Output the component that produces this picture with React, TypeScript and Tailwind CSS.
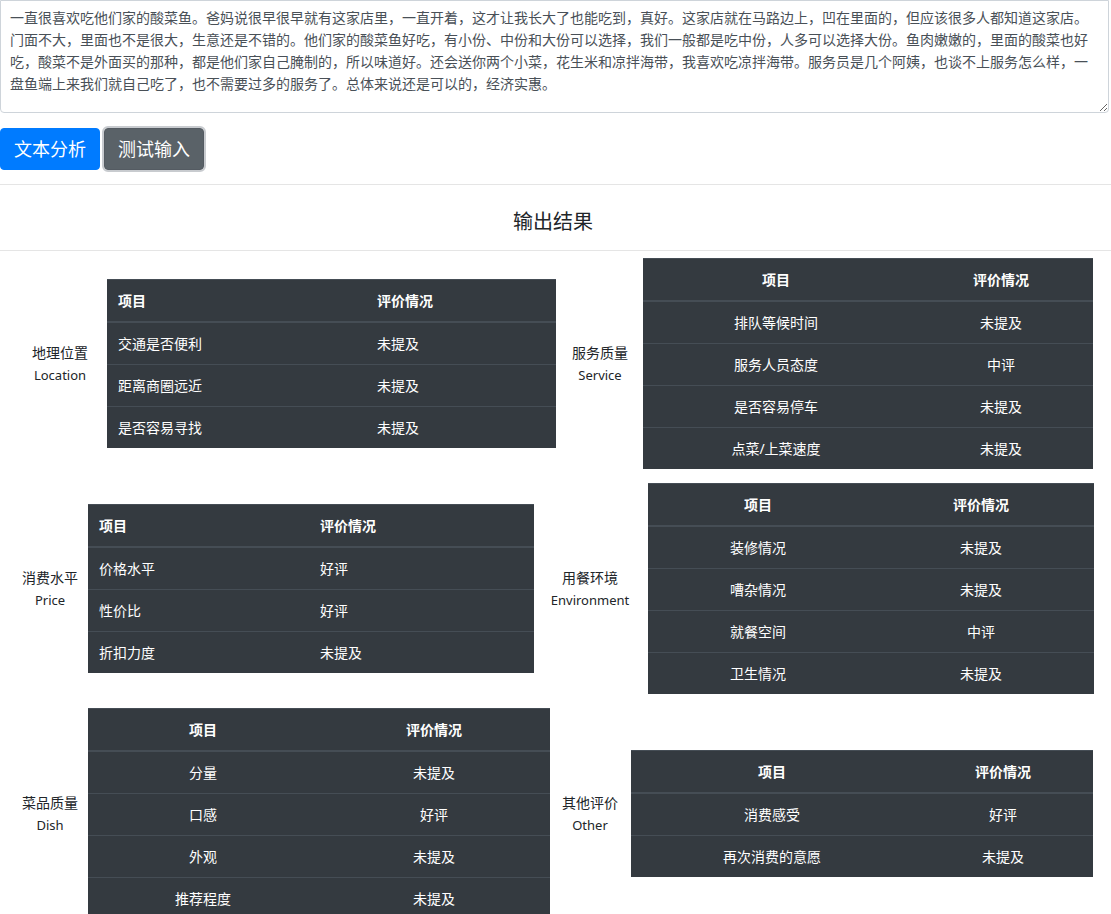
import React from 'react'

type Row = [string, string]

interface Section {
  zh: string
  en: string
  rows: Row[]
  width: string
  col1: string
  center?: boolean
  labelClass: string
  tableClass: string
}

const review =
  '一直很喜欢吃他们家的酸菜鱼。爸妈说很早很早就有这家店里，一直开着，这才让我长大了也能吃到，真好。这家店就在马路边上，凹在里面的，但应该很多人都知道这家店。门面不大，里面也不是很大，生意还是不错的。他们家的酸菜鱼好吃，有小份、中份和大份可以选择，我们一般都是吃中份，人多可以选择大份。鱼肉嫩嫩的，里面的酸菜也好吃，酸菜不是外面买的那种，都是他们家自己腌制的，所以味道好。还会送你两个小菜，花生米和凉拌海带，我喜欢吃凉拌海带。服务员是几个阿姨，也谈不上服务怎么样，一盘鱼端上来我们就自己吃了，也不需要过多的服务了。总体来说还是可以的，经济实惠。'

const rowsOfSections: Section[][] = [
  [
    {
      zh: '地理位置',
      en: 'Location',
      rows: [
        ['交通是否便利', '未提及'],
        ['距离商圈远近', '未提及'],
        ['是否容易寻找', '未提及'],
      ],
      width: 'w-[449px]',
      col1: 'w-[259px]',
      labelClass: 'ml-[20px] w-[80px]',
      tableClass: 'ml-[7px]',
    },
    {
      zh: '服务质量',
      en: 'Service',
      rows: [
        ['排队等候时间', '未提及'],
        ['服务人员态度', '中评'],
        ['是否容易停车', '未提及'],
        ['点菜/上菜速度', '未提及'],
      ],
      width: 'w-[450px]',
      col1: 'w-[266px]',
      center: true,
      labelClass: 'ml-[2px] w-[86px]',
      tableClass: '',
    },
  ],
  [
    {
      zh: '消费水平',
      en: 'Price',
      rows: [
        ['价格水平', '好评'],
        ['性价比', '好评'],
        ['折扣力度', '未提及'],
      ],
      width: 'w-[446px]',
      col1: 'w-[221px]',
      labelClass: 'ml-[12px] w-[76px]',
      tableClass: '',
    },
    {
      zh: '用餐环境',
      en: 'Environment',
      rows: [
        ['装修情况', '未提及'],
        ['嘈杂情况', '未提及'],
        ['就餐空间', '中评'],
        ['卫生情况', '未提及'],
      ],
      width: 'w-[446px]',
      col1: 'w-[220px]',
      center: true,
      labelClass: 'w-[70px]',
      tableClass: 'ml-[23px]',
    },
  ],
  [
    {
      zh: '菜品质量',
      en: 'Dish',
      rows: [
        ['分量', '未提及'],
        ['口感', '好评'],
        ['外观', '未提及'],
        ['推荐程度', '未提及'],
      ],
      width: 'w-[462px]',
      col1: 'w-[230px]',
      center: true,
      labelClass: 'ml-[12px] w-[76px]',
      tableClass: '',
    },
    {
      zh: '其他评价',
      en: 'Other',
      rows: [
        ['消费感受', '好评'],
        ['再次消费的意愿', '未提及'],
      ],
      width: 'w-[462px]',
      col1: 'w-[282px]',
      center: true,
      labelClass: 'w-[70px]',
      tableClass: 'ml-[6px]',
    },
  ],
]

function ResultTable({ s }: { s: Section }) {
  const align = s.center ? 'text-center' : 'text-left pl-[11px]'
  return (
    <table
      className={`${s.width} ${s.tableClass} shrink-0 table-fixed border-collapse bg-[#343a40] text-[14px] text-white`}
    >
      <thead>
        <tr>
          <th className={`${s.col1} ${align} border-t border-b-2 border-[#454d55] py-[10px] leading-[21px] font-bold`}>
            项目
          </th>
          <th className={`${align} border-t border-b-2 border-[#454d55] py-[10px] leading-[21px] font-bold`}>
            评价情况
          </th>
        </tr>
      </thead>
      <tbody>
        {s.rows.map(([item, value]) => (
          <tr key={item}>
            <td className={`${align} border-t border-[#454d55] py-[10px] leading-[21px]`}>{item}</td>
            <td className={`${align} border-t border-[#454d55] py-[10px] leading-[21px]`}>{value}</td>
          </tr>
        ))}
      </tbody>
    </table>
  )
}

function SectionCell({ s, wide }: { s: Section; wide: string }) {
  return (
    <div className={`${wide} flex items-center`}>
      <div className={`${s.labelClass} flex shrink-0 flex-col items-center leading-[22px] text-[#212529]`}>
        <span className="whitespace-nowrap text-[14px]">{s.zh}</span>
        <span className="whitespace-nowrap text-[13px]">{s.en}</span>
      </div>
      <ResultTable s={s} />
    </div>
  )
}

export default function App() {
  return (
    <div
      className="w-[1111px] bg-white text-[#212529]"
      style={{ fontFamily: '"Noto Sans", "Noto Sans CJK SC", sans-serif' }}
    >
      <textarea
        readOnly
        value={review}
        className="block h-[113px] w-[1109px] resize-y rounded-b-[4px] border border-[#ced4da] px-[9px] pt-[5px] text-[14px] leading-[22px] text-[#495057] outline-none"
        style={{ fontFamily: '"Noto Sans CJK SC", sans-serif' }}
      />

      <div className="mt-[13px] flex items-center gap-[2px]">
        <button className="h-[42px] rounded-[4px] border border-[#007bff] bg-[#007bff] px-[13px] text-[18px] leading-[27px] text-white">
          文本分析
        </button>
        <button className="h-[46px] rounded-[6px] border-2 border-[#c8cbcf] p-0">
          <span className="block h-[42px] rounded-[4px] border border-[#545b62] bg-[#5a6268] px-[13px] text-[18px] leading-[40px] text-white">
            测试输入
          </span>
        </button>
      </div>

      <div className="mt-[12px] border-t border-[#e5e5e5] pt-[22px] pr-[5px] pb-[13px] text-center text-[20px] leading-[30px]">
        输出结果
      </div>
      <div className="border-t border-[#e5e5e5]" />

      <div className="mt-[7px] flex flex-col gap-[14px] pb-4">
        {rowsOfSections.map((pair, i) => (
          <div key={i} className="flex">
            <SectionCell s={pair[0]} wide="w-[555px]" />
            <SectionCell s={pair[1]} wide="w-[556px]" />
          </div>
        ))}
      </div>
    </div>
  )
}
